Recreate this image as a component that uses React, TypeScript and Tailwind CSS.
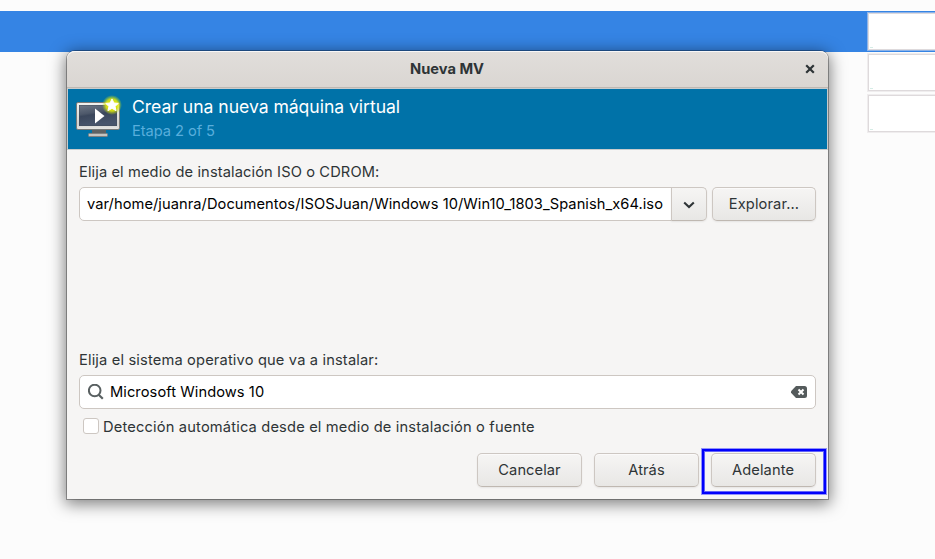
import type { ReactNode } from "react";

function MonitorIcon() {
  return (
    <svg width="56" height="56" viewBox="0 0 56 56" className="block shrink-0">
      <defs>
        <linearGradient id="frame" x1="0" y1="0" x2="0" y2="1">
          <stop offset="0" stopColor="#f2f2f0" />
          <stop offset="0.8" stopColor="#d4d4d1" />
          <stop offset="1" stopColor="#e8e8e6" />
        </linearGradient>
        <linearGradient id="screen" x1="0" y1="0" x2="0.3" y2="1">
          <stop offset="0" stopColor="#6d7685" />
          <stop offset="0.42" stopColor="#4d586a" />
          <stop offset="0.52" stopColor="#3b475c" />
          <stop offset="1" stopColor="#48556c" />
        </linearGradient>
        <radialGradient id="glow">
          <stop offset="0" stopColor="#f4f800" />
          <stop offset="0.6" stopColor="#dfe80c" stopOpacity="0.9" />
          <stop offset="1" stopColor="#b8d820" stopOpacity="0" />
        </radialGradient>
      </defs>
      <path d="M20 41h14v3H20z" fill="#5d6264" />
      <rect x="16.500" y="44.500" width="19" height="3" rx="0.800" fill="#c4c4c1" stroke="#7e8080" />
      <rect x="4.500" y="13.500" width="43" height="27" rx="1.500" fill="url(#frame)" stroke="#777a79" />
      <rect x="7" y="16" width="38" height="21" fill="#414b5a" />
      <rect x="7.500" y="16.500" width="37" height="20" fill="url(#screen)" />
      <path d="M23 19.500L32.500 27L23 34.500z" fill="#fff" />
      <circle cx="40" cy="16" r="10" fill="url(#glow)" />
      <path
        d="M40 9.900l1.900 4.100 4.400.4-3.300 3 1.100 4.300-4.100-2.400-4.100 2.400 1.100-4.300-3.300-3 4.400-.4z"
        fill="#fff"
        stroke="#fff"
        strokeLinejoin="round"
      />
    </svg>
  );
}

function Button({ children, className }: { children: ReactNode; className: string }) {
  return (
    <button
      className={`h-[34px] rounded-[5px] border border-[#cdc7c2] border-b-[#bfb8b1] bg-linear-to-b from-[#f6f5f4] to-[#e8e7e5] text-center shadow-[inset_0_1px_#fbfafa,0_1px_2px_rgba(0,0,0,0.07)] ${className}`}
    >
      {children}
    </button>
  );
}

function Thumbnail({ edge }: { edge: string }) {
  return (
    <div className={`h-[39px] w-[68px] border border-r-0 ${edge}`}>
      <div className="flex h-full items-end border border-r-0 border-[#dedadc] bg-white pb-px pl-px">
        <span className="h-px w-[3px] bg-[#d5ece6]" />
      </div>
    </div>
  );
}

function Desktop() {
  return (
    <div className="flex h-full flex-col bg-[#fcfcfc] pt-[11px]">
      <div className="flex h-[41px] justify-end bg-[#3584e4] pt-px">
        <Thumbnail edge="border-[#8db3e8]" />
      </div>
      <div className="mt-px flex flex-col items-end gap-[2px]">
        <Thumbnail edge="border-[#efedee]" />
        <Thumbnail edge="border-[#efedee]" />
      </div>
    </div>
  );
}

export default function App() {
  return (
    <div className="relative h-[559px] w-[935px] overflow-hidden font-['Inter',sans-serif] text-[14.667px] text-[#2e3436]">
      <Desktop />
      <main className="absolute top-[51px] left-[67px] flex h-[448px] w-[761px] flex-col rounded-t-[8px] bg-[#f6f5f4] shadow-[0_0_0_1px_rgba(0,0,0,0.3),0_3px_16px_2px_rgba(0,0,0,0.5)]">
        <header className="grid h-[37px] shrink-0 grid-cols-[1fr_auto_1fr] items-center rounded-t-[8px] border-b border-[#bfb8b1] bg-linear-to-b from-[#e1dedb] to-[#dad6d2] shadow-[inset_0_1px_#f8f7f7]">
          <span />
          <h1 className="mr-px text-[14.667px] font-bold">Nueva MV</h1>
          <svg width="10" height="10" viewBox="0 0 10 10" className="mr-[13px] justify-self-end">
            <path d="M1.200 1.200L8.800 8.800M8.800 1.200L1.200 8.800" stroke="#2e3436" strokeWidth="2.200" />
          </svg>
        </header>
        <section className="flex h-[62px] shrink-0 border border-[#c8cccd] bg-[#0072a8] pl-1">
          <MonitorIcon />
          <div className="flex flex-col pl-1">
            <h2 className="mt-[6px] h-6 text-[17.6px] leading-6 tracking-[-0.04px] text-white">
              Crear una nueva máquina virtual
            </h2>
            <p className="mt-[2px] leading-[21px] tracking-[-0.06px] text-[#59aedc]">Etapa 2 of 5</p>
          </div>
        </section>
        <section className="flex flex-1 flex-col px-3 pt-[10px]">
          <label className="h-6 leading-6 tracking-[0.11px]">Elija el medio de instalación ISO o CDROM:</label>
          <div className="mt-[3px] flex h-[34px]">
            <div className="flex w-[593px] items-center overflow-hidden rounded-l-[5px] border border-[#cdc7c2] bg-white pl-[7px] tracking-[0.06px] whitespace-nowrap text-black">
              var/home/juanra/Documentos/ISOSJuan/Windows 10/Win10_1803_Spanish_x64.iso
            </div>
            <button className="-ml-px flex w-9 items-center justify-center rounded-r-[5px] border border-[#cdc7c2] border-b-[#bfb8b1] bg-linear-to-b from-[#f6f5f4] to-[#e8e7e5] shadow-[0_1px_2px_rgba(0,0,0,0.07)]">
              <svg width="12" height="8" viewBox="0 0 12 8" fill="none" className="mt-[2px]">
                <path d="M1.200 1.500L6 6L10.800 1.500" stroke="#2e3436" strokeWidth="2.100" />
              </svg>
            </button>
            <Button className="ml-[5px] w-[104px] tracking-[0.11px]">Explorar...</Button>
          </div>
          <label className="mt-[127px] h-6 leading-6 tracking-[0.155px]">
            Elija el sistema operativo que va a instalar:
          </label>
          <div className="mt-[3px] flex h-[34px] items-center rounded-[5px] border border-[#cdc7c2] bg-white pr-2 pl-2 text-black">
            <svg width="16" height="16" viewBox="0 0 16 16" fill="none" className="mr-[6px]">
              <circle cx="6.700" cy="6.500" r="5.800" stroke="#596061" strokeWidth="2" />
              <path d="M10.700 10.700L14.800 14.800" stroke="#596061" strokeWidth="2.200" />
            </svg>
            <span className="flex-1 tracking-[0.07px]">Microsoft Windows 10</span>
            <svg width="16" height="12" viewBox="0 0 16 12">
              <path d="M5 0H13.500Q16 0 16 2.500V9.500Q16 12 13.500 12H5L0 6.800V5.200z" fill="#555b5c" />
              <path d="M7.500 3.500L12.500 8.500M12.500 3.500L7.500 8.500" stroke="#fff" strokeWidth="2" />
            </svg>
          </div>
          <label className="mt-[6px] flex h-6 items-center pl-1 tracking-[0.165px]">
            <span className="mr-1 mb-[2px] h-4 w-4 rounded-[3px] border border-[#cdc7c2] bg-white" />
            Detección automática desde el medio de instalación o fuente
          </label>
          <div className="mt-[14px] flex justify-end gap-3">
            <Button className="w-[105px] tracking-[0.07px]">Cancelar</Button>
            <Button className="w-[105px] tracking-[0.07px]">Atrás</Button>
            <Button className="w-[105px] pr-px tracking-[0.11px]">Adelante</Button>
          </div>
        </section>
      </main>
      <div className="absolute top-[449px] left-[702px] h-[45px] w-[124px] border-2 border-[#0000fc] shadow-[0_0_0_1px_rgba(0,0,252,0.4),inset_0_0_0_1px_rgba(0,0,252,0.6)]" />
    </div>
  );
}
